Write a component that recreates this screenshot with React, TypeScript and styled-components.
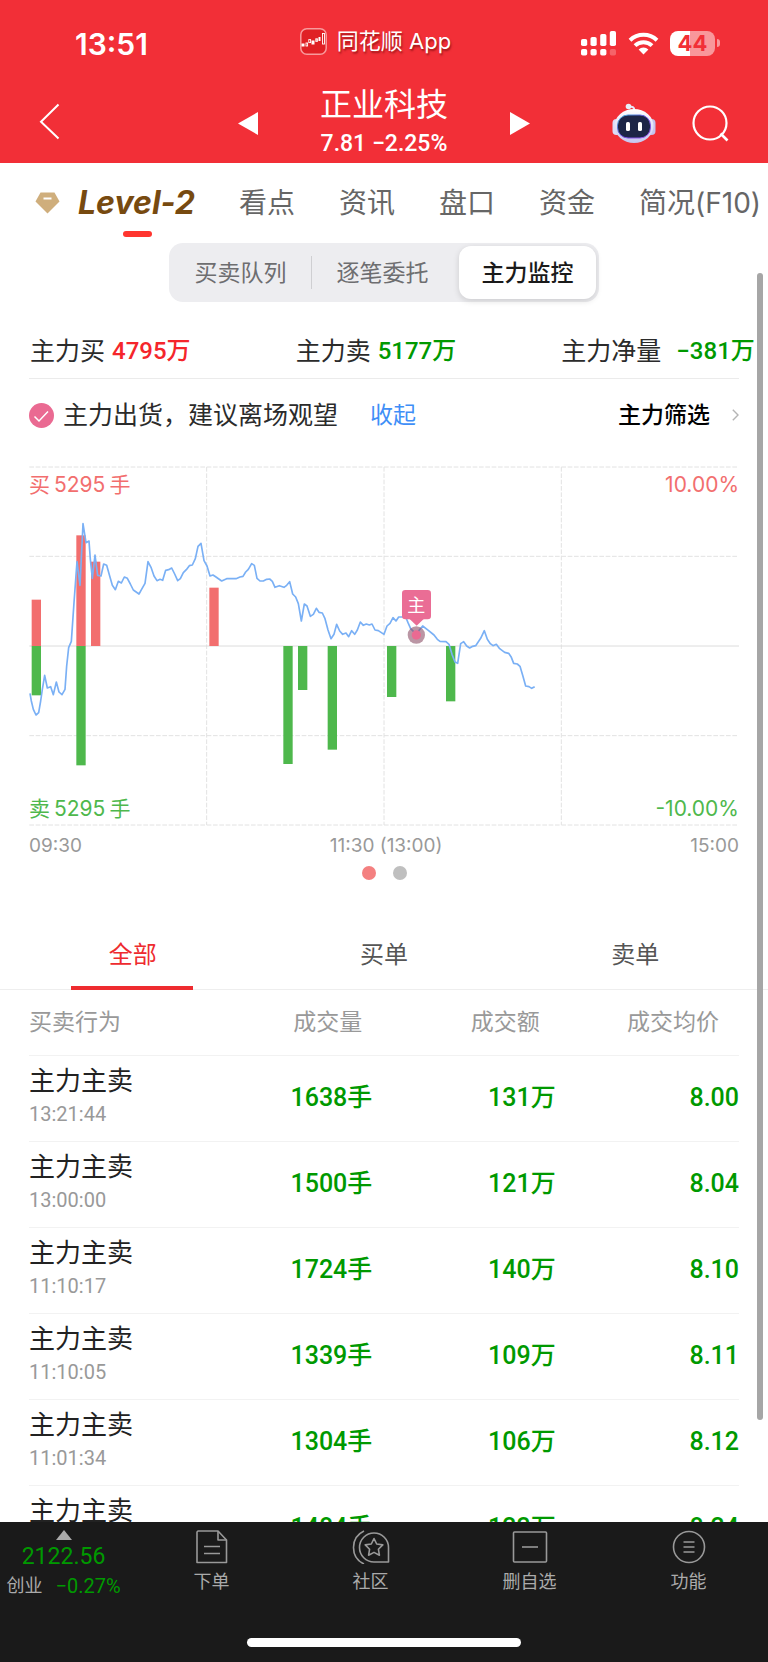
import React, { useState } from "react";
import styled, { createGlobalStyle } from "styled-components";

const sans = `Inter, "Noto Sans CJK SC", sans-serif`;
const digits = `Roboto, "Noto Sans CJK SC", sans-serif`;

const RED = "#f22f37";
const UP = "#f5252b";
const DOWN = "#009900";

const GlobalStyle = createGlobalStyle`
  *, *::before, *::after { box-sizing: border-box; }
  body { margin: 0; background: #fff; font-family: ${sans}; color: #222; }
  button { border: 0; padding: 0; margin: 0; background: none; font: inherit; color: inherit; cursor: pointer; }
  h1, p { margin: 0; font-weight: 400; }
  svg { display: block; }
`;

const Page = styled.div`
  display: flex;
  flex-direction: column;
  height: 100vh;
  background: #fff;
`;

const Header = styled.header`
  flex: none;
  background: ${RED};
  color: #fff;
`;

const StatusBar = styled.div`
  display: grid;
  grid-template-columns: 1fr auto 1fr;
  align-items: center;
  height: 82px;
  padding: 0 48px 0 31px;
`;

const Clock = styled.time`
  padding-left: 44px;
  font-size: 30px;
  line-height: 36px;
  font-weight: 600;
  padding-top: 6px;
`;

const AppBadge = styled.div`
  display: flex;
  align-items: center;
  gap: 10px;
  font-size: 22px;
  line-height: 32px;
  text-shadow: 1px 2px 2px rgba(90, 0, 0, 0.55);
`;

const StatusIcons = styled.div`
  display: flex;
  align-items: center;
  justify-content: flex-end;
  gap: 11px;
  padding-top: 4px;
`;

const Battery = styled.div`
  display: flex;
  align-items: center;
  gap: 2px;
  &::after {
    content: "";
    width: 3px;
    height: 8px;
    border-radius: 0 4px 4px 0;
    background: rgba(255, 255, 255, 0.5);
  }
`;

const BatteryCell = styled.span`
  width: 45px;
  height: 25px;
  border-radius: 8px;
  background: linear-gradient(90deg, #fff 44%, rgba(255, 255, 255, 0.5) 44%);
  color: ${RED};
  font-size: 22px;
  line-height: 25px;
  font-weight: 700;
  text-align: center;
`;

const NavBar = styled.div`
  display: grid;
  grid-template-columns: 1fr auto 1fr;
  align-items: center;
  height: 81px;
  padding: 2px 39px 0;
`;

const StockSwitcher = styled.div`
  display: flex;
  align-items: center;
  gap: 62px;
`;

const StockTitle = styled.div`
  text-align: center;
`;

const StockName = styled.h1`
  font-size: 32px;
  line-height: 40px;
`;

const StockQuote = styled.p`
  font-family: ${digits};
  font-size: 23px;
  line-height: 38px;
  font-weight: 500;
`;

const NavActions = styled.div`
  display: flex;
  align-items: center;
  justify-content: flex-end;
  gap: 36px;
`;

const Body = styled.main`
  position: relative;
  flex: 1;
  min-height: 0;
  display: flex;
`;

const Scroller = styled.div`
  flex: 1;
  min-width: 0;
  overflow-x: hidden;
  overflow-y: auto;
  scrollbar-width: none;
`;

const ScrollThumb = styled.div`
  position: absolute;
  right: 5px;
  top: 110px;
  bottom: 102px;
  width: 6px;
  border-radius: 3px;
  background: #a6a6a6;
`;

const SectionTabs = styled.nav`
  display: flex;
  align-items: center;
  gap: 44px;
  height: 77px;
  padding: 3px 0 0 35px;
  white-space: nowrap;
`;

const SectionTab = styled.button`
  font-size: 28px;
  line-height: 40px;
  color: #666;
`;

const LevelTab = styled.button`
  position: relative;
  display: flex;
  align-items: center;
  gap: 18px;
  font-size: 32px;
  line-height: 40px;
  font-weight: 700;
  font-style: italic;
  color: #774a10;
  &::after {
    content: "";
    position: absolute;
    left: 88px;
    bottom: -14px;
    width: 29px;
    height: 6px;
    border-radius: 3px;
    background: #ff352f;
  }
`;

const Segmented = styled.div`
  display: flex;
  align-items: center;
  width: 430px;
  height: 59px;
  margin: 3px auto 0;
  padding: 3px;
  border-radius: 14px;
  background: #ededf0;
`;

const Segment = styled.button<{ $active?: boolean }>`
  flex: none;
  width: 137px;
  height: 53px;
  border-radius: 12px;
  font-size: 23px;
  line-height: 32px;
  color: ${(p) => (p.$active ? "#1a1a1a" : "#6e6e70")};
  font-weight: ${(p) => (p.$active ? 500 : 400)};
  background: ${(p) => (p.$active ? "#fff" : "transparent")};
  box-shadow: ${(p) => (p.$active ? "0 2px 6px rgba(0,0,0,0.14)" : "none")};
  &:last-child { margin-left: auto; }
`;

const SegmentDivider = styled.span`
  width: 1px;
  height: 33px;
  margin: 0 2px;
  background: #cfcfd2;
`;

const Stats = styled.dl`
  display: grid;
  grid-template-columns: 36% 36% 1fr;
  align-items: center;
  height: 51px;
  margin: 25px 0 0;
  padding: 0 0 4px 30px;
  white-space: nowrap;
`;

const Stat = styled.div<{ $gap: number }>`
  display: flex;
  align-items: center;
  gap: ${(p) => p.$gap}px;
`;

const StatLabel = styled.dt`
  font-size: 25px;
  line-height: 36px;
  color: #2b2b2b;
`;

const StatValue = styled.dd<{ $color: string }>`
  margin: 0;
  font-family: ${digits};
  font-size: 24px;
  line-height: 36px;
  font-weight: 500;
  color: ${(p) => p.$color};
`;

const Content = styled.section`
  margin: 0 29px;
`;

const Notice = styled.div`
  display: flex;
  align-items: center;
  height: 73px;
  border-top: 1px solid #ebebeb;
  font-size: 25px;
  line-height: 36px;
  color: #2b2b2b;
`;

const NoticeText = styled.p`
  margin: 0 32px 0 9px;
`;

const TextButton = styled.button<{ $color: string; $weight: number }>`
  display: flex;
  align-items: center;
  gap: 22px;
  font-size: 23px;
  font-weight: ${(p) => p.$weight};
  color: ${(p) => p.$color};
`;

const Spacer = styled.span`
  flex: 1;
`;

const ChartBox = styled.div`
  position: relative;
  margin-top: 15px;
  svg { width: 100%; height: auto; }
`;

const ChartLabel = styled.span<{ $side: "left" | "right"; $edge: "top" | "bottom"; $color: string }>`
  position: absolute;
  display: flex;
  gap: 4px;
  ${(p) => p.$side}: 0;
  ${(p) => p.$edge}: ${(p) => (p.$edge === "top" ? 4 : 2)}px;
  font-size: 21px;
  line-height: 30px;
  color: ${(p) => p.$color};
`;

const TimeAxis = styled.div`
  display: flex;
  justify-content: space-between;
  align-items: center;
  height: 40px;
  font-size: 19px;
  line-height: 24px;
  color: #999;
`;

const Pager = styled.div`
  display: flex;
  justify-content: center;
  gap: 17px;
`;

const Dot = styled.button<{ $on?: boolean }>`
  width: 14px;
  height: 14px;
  border-radius: 50%;
  background: ${(p) => (p.$on ? "#f48080" : "#bfbfbf")};
`;

const FilterTabs = styled.div`
  display: grid;
  grid-template-columns: repeat(3, 1fr);
  height: 70px;
  margin-top: 40px;
  padding: 0 7px;
  border-bottom: 1px solid #eee;
`;

const FilterTab = styled.button<{ $active: boolean }>`
  position: relative;
  font-size: 24px;
  line-height: 34px;
  color: ${(p) => (p.$active ? "#ee2b2f" : "#555")};
  &::after {
    content: "";
    position: absolute;
    left: calc(50% - 62px);
    bottom: -1px;
    width: 122px;
    height: 4px;
    background: ${(p) => (p.$active ? "#ee2b2f" : "transparent")};
  }
`;

const Table = styled.table`
  width: 100%;
  border-collapse: collapse;
  table-layout: fixed;
`;

const HeadCell = styled.th<{ $inset?: number }>`
  height: 65px;
  padding: 0 ${(p) => p.$inset ?? 0}px 0 0;
  border-bottom: 1px solid #f2f2f2;
  font-size: 23px;
  line-height: 32px;
  font-weight: 400;
  color: #999;
  text-align: right;
  white-space: nowrap;
  &:first-child { width: 160px; text-align: left; }
`;

const NameCell = styled.td`
  height: 86px;
  padding: 7px 0 0;
  border-bottom: 1px solid #f2f2f2;
  vertical-align: top;
`;

const TradeName = styled.div`
  font-size: 26px;
  line-height: 36px;
  color: #222;
  white-space: nowrap;
`;

const TradeTime = styled.time`
  display: block;
  font-family: ${digits};
  font-size: 20px;
  line-height: 30px;
  color: #999;
`;

const ValueCell = styled.td`
  padding: 0;
  border-bottom: 1px solid #f2f2f2;
  font-family: ${digits};
  font-size: 25px;
  line-height: 36px;
  font-weight: 500;
  color: ${DOWN};
  text-align: right;
`;

const Footer = styled.footer`
  flex: none;
  background: #1a1a1a;
  color: #aaa;
`;

const FooterNav = styled.nav`
  display: grid;
  grid-template-columns: 132px repeat(4, 1fr);
  height: 116px;
`;

const FooterItem = styled.button`
  display: flex;
  flex-direction: column;
  align-items: center;
  padding-top: 8px;
  gap: 4px;
  font-size: 18px;
  line-height: 28px;
`;

const IndexItem = styled.button`
  display: flex;
  flex-direction: column;
  align-items: center;
  padding: 8px 5px 0 0;
  font-family: ${digits};
  color: ${DOWN};
`;

const IndexValue = styled.span`
  font-size: 23px;
  line-height: 34px;
`;

const IndexChange = styled.span`
  display: flex;
  gap: 13px;
  font-size: 20px;
  line-height: 24px;
`;

const IndexName = styled.span`
  font-size: 18px;
  color: #aaa;
`;

const HomeIndicator = styled.div`
  width: 274px;
  height: 9px;
  margin: 0 auto 15px;
  border-radius: 5px;
  background: #fff;
`;

const PRICE_LINE =
  "90,702 94,725 100,750 108,767 116,760 122,725 127,690 134,648 142,686 152,682 160,706 169,668 177,698 186,706 195,690 200,620 206,565 214,546 222,430 231,307 240,378 249,193 258,250 267,245 271,300 277,357 285,287 293,348 303,350 311,314 320,318 329,350 337,378 346,391 355,366 364,371 373,353 382,357 391,374 400,392 417,404 426,388 435,372 444,307 453,324 462,350 471,364 480,360 488,363 497,333 506,331 515,326 524,344 533,364 541,358 550,340 559,331 568,319 577,317 586,298 594,261 603,252 612,304 621,320 630,350 639,347 648,353 665,365 680,358 708,358 720,353 729,351 737,338 745,330 755,313 763,318 771,357 780,365 790,365 800,360 809,359 817,366 825,384 838,379 852,384 860,378 869,367 878,404 887,413 895,433 904,485 913,434 921,440 931,471 940,465 949,447 957,459 967,461 975,478 984,512 993,538 1002,525 1010,495 1019,515 1028,525 1038,521 1046,532 1055,514 1064,525 1072,512 1081,488 1090,498 1099,494 1108,497 1116,494 1125,512 1135,514 1152,525 1161,500 1170,492 1179,475 1188,485 1196,473 1217,473 1224,490 1232,508 1249,525 1258,512 1268,500 1285,513 1302,527 1312,540 1320,546 1338,547 1347,555 1356,585 1365,608 1373,612 1382,553 1391,547 1400,560 1409,566 1418,561 1427,559 1442,537 1453,514 1462,540 1471,553 1479,559 1489,555 1499,568 1514,579 1526,582 1534,594 1541,612 1552,614 1560,621 1568,648 1577,680 1587,682 1595,687 1604,682";

const ZERO = 560;
const BUYS = [[95, 421], [229, 228], [273, 307], [628, 385]];
const SELLS = [[95, 708], [229, 918], [850, 914], [894, 692], [983, 871], [1161, 713], [1338, 726]];

function Chart() {
  return (
    <svg viewBox="87 20 2130 1080" role="img" aria-label="主力监控分时图">
      <g stroke="#e2e2e2" strokeWidth="3" strokeDasharray="14 5" fill="none">
        {[23, 291, 829, 1097].map((y) => <path key={y} d={`M88 ${y}H2212`} />)}
        {[620, 1152, 1684].map((x) => <path key={x} d={`M${x} 23V1097`} />)}
      </g>
      <path d="M88 560H2217" stroke="#dcdcdc" strokeWidth="3" />
      {BUYS.map(([x, y]) => <rect key={x} x={x} y={y} width="28" height={ZERO - y} fill="#f26e6e" />)}
      {SELLS.map(([x, y]) => <rect key={x} x={x} y={ZERO} width="28" height={y - ZERO} fill="#4eb84c" />)}
      <polyline points={PRICE_LINE} fill="none" stroke="#7ab0f5" strokeWidth="5" strokeLinejoin="round" />
      <circle cx="1249" cy="527" r="26" fill="#8c5068" fillOpacity="0.6" />
      <circle cx="1249" cy="527" r="14" fill="#ea6a92" />
      <rect x="1206" y="392" width="87" height="88" rx="10" fill="#ea6d95" />
      <path d="M1228 478H1272L1250 499Z" fill="#ea6d95" />
      <text x="1249" y="459" fontSize="54" fill="#fff" textAnchor="middle">主</text>
    </svg>
  );
}

const AppLogo = () => (
  <svg width="27" height="27" viewBox="0 0 27 27">
    <rect x="0.8" y="0.8" width="25.4" height="25.4" rx="6" fill="#e02025" stroke="#f89a9c" strokeWidth="1.5" />
    <g fill="#fff">
      <rect x="1.5" y="15.5" width="3" height="3" />
      <rect x="11.5" y="12.5" width="3" height="4" />
      <rect x="18.5" y="9" width="2" height="4" />
    </g>
    <g fill="none" stroke="#fff" strokeWidth="0.9">
      <rect x="6" y="15" width="1.6" height="3" />
      <rect x="8.8" y="11.6" width="1.8" height="3" />
      <rect x="15.8" y="10.8" width="1.6" height="2.6" />
      <rect x="22.5" y="5.5" width="2" height="10.5" />
    </g>
  </svg>
);

const Signal = () => (
  <svg width="36" height="25" viewBox="0 0 36 25" fill="#fff">
    {[[0, 8], [9.5, 6], [19.2, 3], [28.8, 0]].map(([x, y]) => (
      <rect key={x} x={x} y={y} width="6.2" height={15 - y} rx="1.8" />
    ))}
    {[0, 9.5, 19.2, 28.8].map((x) => (
      <rect key={x} x={x} y="18" width="6.2" height="6.5" rx="1.8" opacity={x > 28 ? 0.25 : 1} />
    ))}
  </svg>
);

const Wifi = () => (
  <svg width="31" height="23" viewBox="0 0 31 23">
    <g fill="none" stroke="#fff" strokeWidth="4">
      <path d="M2 8.2A19.6 19.6 0 0 1 29 8.2" />
      <path d="M7 13.6A12.4 12.4 0 0 1 24 13.6" />
    </g>
    <path d="M15.5 22.5L10.6 17.6A7 7 0 0 1 20.4 17.6Z" fill="#fff" />
  </svg>
);

const BackIcon = () => (
  <svg width="21" height="37" viewBox="0 0 21 37" fill="none" stroke="#fff" strokeWidth="2">
    <path d="M19.5 1.5L2 18.8L19.5 35.5" />
  </svg>
);

const Triangle = ({ d }: { d: string }) => (
  <svg width="20" height="23" viewBox="0 0 20 23" fill="#fff"><path d={d} /></svg>
);

const Robot = () => (
  <svg width="44" height="42" viewBox="0 0 44 42">
    <defs>
      <linearGradient id="shell" x1="0" y1="0" x2="0" y2="1">
        <stop offset="0" stopColor="#ffffff" />
        <stop offset="1" stopColor="#c6c6f0" />
      </linearGradient>
      <linearGradient id="rim" x1="0" y1="0" x2="1" y2="1">
        <stop offset="0" stopColor="#3fb6d6" />
        <stop offset="0.5" stopColor="#6b4be0" />
        <stop offset="1" stopColor="#a05cf0" />
      </linearGradient>
    </defs>
    <path d="M17 4Q22 2.500 22.500 7.500" fill="none" stroke="#e6e6fa" strokeWidth="2" />
    <circle cx="16.500" cy="3.500" r="2.800" fill="#e6f0fa" />
    <rect x="0.500" y="16" width="8" height="16" rx="4" fill="#dcdcf8" />
    <rect x="35.500" y="16" width="8" height="16" rx="4" fill="#c4c4ee" />
    <ellipse cx="22" cy="23" rx="19.500" ry="17" fill="url(#shell)" />
    <rect x="5.500" y="12" width="33" height="23" rx="10.500" fill="#1d2547" stroke="url(#rim)" strokeWidth="1" />
    <rect x="14" y="19" width="4" height="9" rx="1.600" fill="#fff" />
    <rect x="26" y="19" width="4" height="9" rx="1.600" fill="#fff" />
  </svg>
);

const SearchIcon = () => (
  <svg width="37" height="37" viewBox="0 0 37 37" fill="none" stroke="#fff" strokeWidth="2.2">
    <circle cx="18" cy="18" r="16.5" />
    <path d="M28.5 28.5L35.5 35.5" strokeWidth="2.6" />
  </svg>
);

const Diamond = () => (
  <svg width="25" height="22" viewBox="0 0 25 22">
    <path d="M5.5 0.5H19.5L24.5 9.5L12.5 21.5L0.5 9.5Z" fill="#cfae7c" strokeLinejoin="round" />
    <path d="M8.5 6.5H16.5" stroke="#fff" strokeWidth="2" />
  </svg>
);

const CheckBadge = () => (
  <svg width="25" height="25" viewBox="0 0 25 25" fill="none">
    <circle cx="12.5" cy="12.5" r="12.5" fill="#ea6a92" />
    <path d="M5.5 13.5L10 18L19 8.5" stroke="#fff" strokeWidth="1.5" />
  </svg>
);

const MoreArrow = () => (
  <svg width="7" height="12" viewBox="0 0 7 12" fill="none" stroke="#b5b5b5" strokeWidth="1.4">
    <path d="M0.8 0.8L6 6L0.8 11.2" />
  </svg>
);

const OrderIcon = () => (
  <svg width="34" height="34" viewBox="0 0 34 34" fill="none" stroke="#999" strokeWidth="1.6" strokeLinejoin="round">
    <path d="M3 1H23L31.5 10V32.5H2V2Z" />
    <path d="M23 1V10H31.5M9 16.5H25M9 23.5H25" />
  </svg>
);

const CommunityIcon = () => (
  <svg width="38" height="34" viewBox="0 0 38 34" fill="none" stroke="#999" strokeWidth="1.6" strokeLinejoin="round">
    <path d="M12 1C-2 7.5 -2 27.5 12 34" />
    <path d="M22 32A14.5 14.5 0 1 1 36.5 17.5V32Z" />
    <path d="M22 8.5L24.7 14L30.8 14.9L26.4 19.2L27.4 25.2L22 22.4L16.6 25.2L17.6 19.2L13.2 14.9L19.3 14Z" />
  </svg>
);

const RemoveIcon = () => (
  <svg width="36" height="34" viewBox="0 0 36 34" fill="none" stroke="#999" strokeWidth="1.6">
    <rect x="1.5" y="2" width="33" height="30" rx="1" />
    <path d="M10 17H26" />
  </svg>
);

const MenuIcon = () => (
  <svg width="34" height="34" viewBox="0 0 34 34" fill="none" stroke="#999" strokeWidth="1.6">
    <circle cx="17" cy="17" r="15.5" />
    <path d="M11.5 12H22.5M11.5 17H22.5M11.5 22H22.5" />
  </svg>
);

const TRADES = [
  ["13:21:44", "1638手", "131万", "8.00"],
  ["13:00:00", "1500手", "121万", "8.04"],
  ["11:10:17", "1724手", "140万", "8.10"],
  ["11:10:05", "1339手", "109万", "8.11"],
  ["11:01:34", "1304手", "106万", "8.12"],
  ["", "1484手", "123万", "8.24"],
];

const FILTERS = ["全部", "买单", "卖单"];

export default function App() {
  const [filter, setFilter] = useState("全部");
  return (
    <Page>
      <GlobalStyle />
      <Header>
        <StatusBar>
          <Clock>13:51</Clock>
          <AppBadge><AppLogo />同花顺 App</AppBadge>
          <StatusIcons>
            <Signal />
            <Wifi />
            <Battery><BatteryCell>44</BatteryCell></Battery>
          </StatusIcons>
        </StatusBar>
        <NavBar>
          <div><button aria-label="返回"><BackIcon /></button></div>
          <StockSwitcher>
            <button aria-label="上一只"><Triangle d="M0 11.5L20 0V23Z" /></button>
            <StockTitle>
              <StockName>正业科技</StockName>
              <StockQuote>7.81 −2.25%</StockQuote>
            </StockTitle>
            <button aria-label="下一只"><Triangle d="M20 11.5L0 0V23Z" /></button>
          </StockSwitcher>
          <NavActions>
            <button aria-label="智能助手"><Robot /></button>
            <button aria-label="搜索"><SearchIcon /></button>
          </NavActions>
        </NavBar>
      </Header>

      <Body>
        <Scroller>
          <SectionTabs>
            <LevelTab><Diamond />Level-2</LevelTab>
            {["看点", "资讯", "盘口", "资金", "简况(F10)"].map((t) => (
              <SectionTab key={t}>{t}</SectionTab>
            ))}
          </SectionTabs>
          <Segmented>
            <Segment>买卖队列</Segment>
            <SegmentDivider />
            <Segment>逐笔委托</Segment>
            <Segment $active>主力监控</Segment>
          </Segmented>
          <Stats>
            <Stat $gap={7}><StatLabel>主力买</StatLabel><StatValue $color={UP}>4795万</StatValue></Stat>
            <Stat $gap={7}><StatLabel>主力卖</StatLabel><StatValue $color={DOWN}>5177万</StatValue></Stat>
            <Stat $gap={15}><StatLabel>主力净量</StatLabel><StatValue $color={DOWN}>−381万</StatValue></Stat>
          </Stats>
          <Content>
            <Notice>
              <CheckBadge />
              <NoticeText>主力出货，建议离场观望</NoticeText>
              <TextButton $color="#3f8ff7" $weight={400}>收起</TextButton>
              <Spacer />
              <TextButton $color="#000" $weight={500}>主力筛选<MoreArrow /></TextButton>
            </Notice>
            <ChartBox>
              <Chart />
              <ChartLabel $side="left" $edge="top" $color="#f26e6e">
                <span>买</span><span>5295</span><span>手</span>
              </ChartLabel>
              <ChartLabel $side="right" $edge="top" $color="#f26e6e">10.00%</ChartLabel>
              <ChartLabel $side="left" $edge="bottom" $color="#4eb84c">
                <span>卖</span><span>5295</span><span>手</span>
              </ChartLabel>
              <ChartLabel $side="right" $edge="bottom" $color="#4eb84c">-10.00%</ChartLabel>
            </ChartBox>
            <TimeAxis><span>09:30</span><span>11:30 (13:00)</span><span>15:00</span></TimeAxis>
            <Pager><Dot $on aria-label="第1页" /><Dot aria-label="第2页" /></Pager>
          </Content>
          <FilterTabs>
            {FILTERS.map((f) => (
              <FilterTab key={f} $active={f === filter} onClick={() => setFilter(f)}>{f}</FilterTab>
            ))}
          </FilterTabs>
          <Content>
            <Table>
              <thead>
                <tr>
                  <HeadCell>买卖行为</HeadCell>
                  <HeadCell $inset={10}>成交量</HeadCell>
                  <HeadCell $inset={16}>成交额</HeadCell>
                  <HeadCell $inset={20}>成交均价</HeadCell>
                </tr>
              </thead>
              <tbody>
                {TRADES.map(([time, volume, amount, price]) => (
                  <tr key={volume}>
                    <NameCell>
                      <TradeName>主力主卖</TradeName>
                      {time && <TradeTime>{time}</TradeTime>}
                    </NameCell>
                    <ValueCell>{volume}</ValueCell>
                    <ValueCell>{amount}</ValueCell>
                    <ValueCell>{price}</ValueCell>
                  </tr>
                ))}
              </tbody>
            </Table>
          </Content>
        </Scroller>
        <ScrollThumb />
      </Body>

      <Footer>
        <FooterNav>
          <IndexItem>
            <svg width="16" height="10" viewBox="0 0 16 10"><path d="M8 0L16 10H0Z" fill="#aaa" /></svg>
            <IndexValue>2122.56</IndexValue>
            <IndexChange><IndexName>创业</IndexName>−0.27%</IndexChange>
          </IndexItem>
          <FooterItem><OrderIcon />下单</FooterItem>
          <FooterItem><CommunityIcon />社区</FooterItem>
          <FooterItem><RemoveIcon />删自选</FooterItem>
          <FooterItem><MenuIcon />功能</FooterItem>
        </FooterNav>
        <HomeIndicator />
      </Footer>
    </Page>
  );
}
